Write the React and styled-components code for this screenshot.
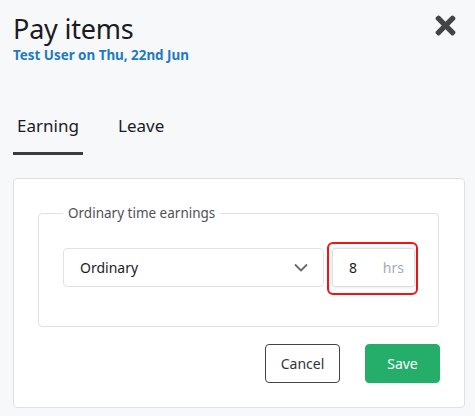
import React from "react";
import styled, { createGlobalStyle } from "styled-components";
import { FaTimes } from "react-icons/fa";

const Global = createGlobalStyle`
  html, body { margin: 0; padding: 0; background: #f7f8fa; }
  body { font-family: "Noto Sans", "Open Sans", sans-serif; color: #1b1b1f; }
  * { box-sizing: border-box; }
`;

const Page = styled.div`
  width: 475px;
  height: 416px;
  padding: 12px 10px 0 13px;
  display: flex;
  flex-direction: column;
`;

const Header = styled.div`
  display: flex;
  justify-content: space-between;
  align-items: flex-start;
`;

const TitleBlock = styled.div`
  display: flex;
  flex-direction: column;
`;

const Title = styled.h1`
  margin: 0;
  font-size: 27px;
  font-weight: 400;
  line-height: 34px;
  color: #1b1b1f;
  letter-spacing: -0.2px;
`;

const Subtitle = styled.div`
  font-size: 13.4px;
  font-weight: 700;
  color: #1d7ac4;
  line-height: 16px;
  margin-top: 1px;
`;

const CloseButton = styled.button`
  border: none;
  background: none;
  padding: 0;
  margin: -1.5px 5px 0 0;
  color: #444448;
  display: flex;
  cursor: pointer;
`;

const Tabs = styled.div`
  display: flex;
  gap: 31px;
  margin-top: 51px;
`;

const Tab = styled.div`
  font-size: 17px;
  line-height: 24px;
  padding: 0 4px 14px;
  width: ${(p) => p.$w}px;
  color: #1b1b1f;
  border-bottom: 3px solid ${(p) => (p.$active ? "#3b3b42" : "transparent")};
`;

const Card = styled.div`
  margin-top: 23px;
  background: #fff;
  border: 1px solid #e0e1e6;
  border-radius: 4px;
  padding: 25px 24px 24px 24px;
  display: flex;
  flex-direction: column;
`;

const Fieldset = styled.fieldset`
  margin: 0 1px 0 0;
  border: 1px solid #e0e1e6;
  border-radius: 4px;
  padding: 25.5px 20px 31px 24px;
`;

const Legend = styled.legend`
  padding: 0 5px;
  font-size: 13.5px;
  color: #4f5056;
`;

const Row = styled.div`
  display: flex;
  align-items: flex-start;
  gap: 3px;
`;

const Select = styled.div`
  flex: 1;
  height: 39px;
  border: 1px solid #e0e1e6;
  border-radius: 4px;
  display: flex;
  align-items: center;
  justify-content: space-between;
  padding: 0 15px 0 16px;
  font-size: 14px;
  color: #1b1b1f;
`;

const Highlight = styled.div`
  margin-top: -6px;
  border: 2px solid #f01414;
  border-radius: 6px;
  padding: 4px 1px 6px 3px;
`;

const NumberBox = styled.div`
  width: 83px;
  height: 39px;
  border: 1px solid #dcdde2;
  border-radius: 3px;
  box-shadow: 0 0 4px rgba(0, 0, 0, 0.12);
  display: flex;
  align-items: center;
  justify-content: space-between;
  padding: 0 10px 0 16px;
  font-size: 14px;
`;

const Unit = styled.span`
  color: #a4abb6;
`;

const Actions = styled.div`
  display: flex;
  justify-content: flex-end;
  gap: 25px;
  margin-top: 17px;
`;

const Button = styled.button`
  width: 75px;
  height: 39px;
  border-radius: 4px;
  font-family: inherit;
  font-size: 14px;
  cursor: pointer;
  border: 1px solid ${(p) => (p.$primary ? "#25ae69" : "#444448")};
  background: ${(p) => (p.$primary ? "#25ae69" : "#fff")};
  color: ${(p) => (p.$primary ? "#fff" : "#333338")};
`;

const Chevron = () => (
  <svg width="14" height="9" viewBox="0 0 14 9" fill="none">
    <path d="M1 1.5L7 7.5L13 1.5" stroke="#66676d" strokeWidth="1.8" />
  </svg>
);

export default function App() {
  return (
    <>
      <Global />
      <Page>
        <Header>
          <TitleBlock>
            <Title>Pay items</Title>
            <Subtitle>Test User on Thu, 22nd Jun</Subtitle>
          </TitleBlock>
          <CloseButton aria-label="Close">
            <FaTimes size={29} />
          </CloseButton>
        </Header>
        <Tabs>
          <Tab $active $w={70}>Earning</Tab>
          <Tab $w={60}>Leave</Tab>
        </Tabs>
        <Card>
          <Fieldset>
            <Legend>Ordinary time earnings</Legend>
            <Row>
              <Select>
                <span>Ordinary</span>
                <Chevron />
              </Select>
              <Highlight>
                <NumberBox>
                  <span>8</span>
                  <Unit>hrs</Unit>
                </NumberBox>
              </Highlight>
            </Row>
          </Fieldset>
          <Actions>
            <Button>Cancel</Button>
            <Button $primary>Save</Button>
          </Actions>
        </Card>
      </Page>
    </>
  );
}
